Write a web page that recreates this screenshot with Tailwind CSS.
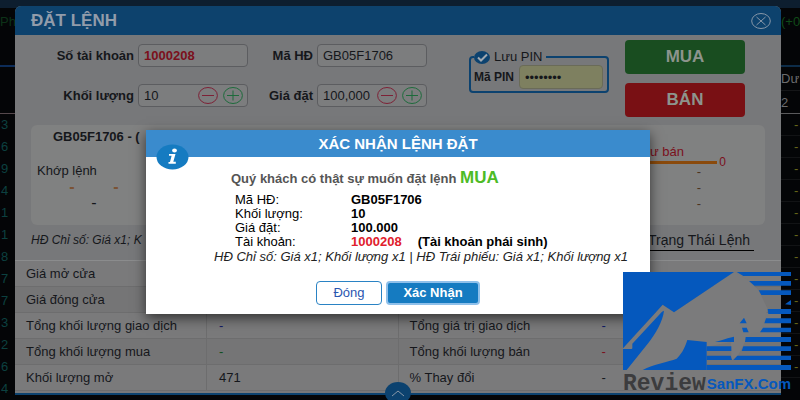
<!DOCTYPE html>
<html lang="vi">
<head>
  <meta charset="UTF-8" />
  <meta name="viewport" content="width=device-width, initial-scale=1" />
  <title>Đặt lệnh</title>
  <script src="https://cdn.jsdelivr.net/npm/@tailwindcss/browser@4"></script>
</head>
<body class="relative bg-[#040507] font-['Liberation_Sans',Arial,sans-serif] text-[13px] leading-4 text-[#15171b] min-h-screen overflow-hidden">

  <!-- top bar of the price board -->
  <div class="absolute inset-x-0 top-0 h-2 bg-[#0d1e2f]"></div>

  <div class="relative flex items-start">
    <!-- price board, left edge -->
    <aside class="w-[15px] shrink-0 overflow-hidden text-[#0c4140] pt-3.5">
      <div class="h-[53px] border-b-2 border-[#0d2c58] text-[#0c3218]">Ph</div>
      <div class="h-[47px] border-b border-[#55484c]"></div>
      <div class="flex flex-col leading-[22px] text-[13px] pl-px">
        <span>3</span><span>6</span><span>9</span><span>4</span><span>1</span><span>1</span><span>8</span><span>7</span><span>7</span><span>3</span><span>2</span><span>6</span><span>4</span>
      </div>
    </aside>

    <!-- order dialog -->
    <main class="relative flex-1 min-w-0 mt-1.5 pb-0.5 bg-[#77787a] rounded-t-md border-b-2 border-[#0c426f]">
      <header class="h-[29px] flex items-center justify-between px-4 bg-[#0d426d] rounded-t-md">
        <h1 class="text-[17px] font-bold text-[#929caa]">ĐẶT LỆNH</h1>
        <button type="button" aria-label="Đóng" class="-mr-1.5">
          <svg width="20" height="16" viewBox="0 0 20 16" fill="none" stroke="#8797a8"><ellipse cx="10" cy="8" rx="9.3" ry="7.5" /><path d="M5.5 4l9 8M14.5 4l-9 8" /></svg>
        </button>
      </header>

      <!-- order form -->
      <form class="flex pt-1 h-[90px]">
        <div class="grid grid-cols-[119px_110px_61px_110px] gap-x-1 gap-y-[17px] pt-[5px] auto-rows-[23px] items-center font-bold">
          <label for="account" class="text-right">Số tài khoản</label>
          <input id="account" value="1000208" class="w-full h-[23px] rounded border border-[#5c5d60] bg-[#7c7d7e] px-[5px] text-[#7b101c] font-bold" />
          <label for="contract" class="text-right">Mã HĐ</label>
          <input id="contract" value="GB05F1706" class="w-full h-[23px] rounded border border-[#5c5d60] bg-[#7c7d7e] px-[5px] font-normal" />

          <label for="volume" class="text-right">Khối lượng</label>
          <div class="flex items-center gap-[5px] h-[23px] rounded border border-[#5c5d60] bg-[#7c7d7e] pl-[5px] pr-1">
            <input id="volume" value="10" class="flex-1 min-w-0 font-normal" />
            <button type="button" aria-label="Giảm khối lượng"><svg width="20" height="17" viewBox="0 0 20 17" fill="none" stroke="#7d2136"><ellipse cx="10" cy="8.5" rx="9.4" ry="8" /><path d="M4 8.5h12" /></svg></button>
            <button type="button" aria-label="Tăng khối lượng"><svg width="20" height="17" viewBox="0 0 20 17" fill="none" stroke="#1d6b3b"><ellipse cx="10" cy="8.5" rx="9.4" ry="8" /><path d="M4 8.5h12M10 3.5v10" /></svg></button>
          </div>
          <label for="price" class="text-right">Giá đặt</label>
          <div class="flex items-center gap-[5px] h-[23px] rounded border border-[#5c5d60] bg-[#7c7d7e] pl-[5px] pr-1">
            <input id="price" value="100,000" class="flex-1 min-w-0 font-normal" />
            <button type="button" aria-label="Giảm giá"><svg width="20" height="17" viewBox="0 0 20 17" fill="none" stroke="#7d2136"><ellipse cx="10" cy="8.5" rx="9.4" ry="8" /><path d="M4 8.5h12" /></svg></button>
            <button type="button" aria-label="Tăng giá"><svg width="20" height="17" viewBox="0 0 20 17" fill="none" stroke="#1d6b3b"><ellipse cx="10" cy="8.5" rx="9.4" ry="8" /><path d="M4 8.5h12M10 3.5v10" /></svg></button>
          </div>
        </div>

        <fieldset class="ml-auto mt-2.5 h-[44px] w-[140px] rounded border-2 border-[#0c426f] pl-[3px] pr-1">
          <legend class="h-4 flex items-center gap-1 pr-1">
            <input id="savePin" type="checkbox" checked class="sr-only" />
            <svg width="16" height="13" viewBox="0 0 16 13"><ellipse cx="8" cy="6.5" rx="8" ry="6.5" fill="#0c426f" /><path d="M4 6.5l3 3 6-6" fill="none" stroke="#a0a8b0" stroke-width="2" /></svg>
            <label for="savePin">Lưu PIN</label>
          </legend>
          <div class="flex items-center justify-between h-6">
            <label for="pin" class="font-bold text-[12px]">Mã PIN</label>
            <input id="pin" type="password" value="12345678" class="w-[84px] h-6 rounded border border-[#6a6b58] bg-[#7e8060] px-[5px]" />
          </div>
        </fieldset>

        <div class="flex flex-col gap-[9px] ml-4 mr-9 mt-px w-[120px] text-[17px] font-bold text-[#8d948d]">
          <button type="button" class="h-[34px] rounded bg-[#194d20]">MUA</button>
          <button type="button" class="h-[34px] rounded bg-[#791014]">BÁN</button>
        </div>
      </form>

      <!-- market depth -->
      <section class="mx-4 h-[100px] rounded-md bg-[#808181] flex justify-between">
        <div class="pl-1.5 pt-1">
          <h2 class="pl-4 font-bold">GB05F1706 - (</h2>
          <p class="mt-[18px]">Khớp lệnh</p>
          <div class="grid grid-cols-[22px_22px_22px] ml-6 text-center text-[16px] leading-4 font-bold text-[#7b5335]">
            <span>-</span><span class="col-start-3">-</span>
            <span class="col-start-2 font-normal text-[#15171b]">-</span>
          </div>
        </div>
        <div class="pt-[19px] pr-[39px] w-[160px] text-[#7b101c]">
          <p class="text-right pr-[42px]">Dư bán</p>
          <div class="flex items-center h-1"><span class="flex-1 h-[3px] bg-[#8a4a0c]"></span><span class="pl-0.5 text-[12px] leading-3">0</span></div>
          <div class="flex flex-col items-end pr-[25px] text-[#4c3420]"><span>-</span><span>-</span><span>-</span></div>
        </div>
      </section>

      <div class="flex justify-between items-start px-4 h-[35px] pt-[7px]">
        <p class="italic text-[12px]">HĐ Chỉ số: Giá x1; K</p>
        <a href="#" class="mr-[11px] pr-1 border-b border-black h-[19px] text-[14px]">Trạng Thái Lệnh</a>
      </div>

      <table class="w-full table-fixed border-t border-[#8b8c8d]">
        <tbody class="bg-[#7a7a7b] [&>tr]:h-[26px] [&>tr]:border-b [&>tr]:border-[#6d6d6e] [&_th]:text-left [&_th]:font-normal [&_th]:pl-[11px] [&_td]:pl-3 [&>tr:nth-child(even)]:bg-[#757576]">
          <tr><th>Giá mở cửa</th><td colspan="3"></td></tr>
          <tr><th>Giá đóng cửa</th><td colspan="3"></td></tr>
          <tr><th>Tổng khối lượng giao dịch</th><td class="text-[#101a66] border-l border-[#6d6d6e]">-</td><th class="border-l border-[#6d6d6e]">Tổng giá trị giao dịch</th><td class="text-[#101a66]">-</td></tr>
          <tr><th>Tổng khối lượng mua</th><td class="text-[#0e5020] border-l border-[#6d6d6e]">-</td><th class="border-l border-[#6d6d6e]">Tổng khối lượng bán</th><td class="text-[#7b101c]">-</td></tr>
          <tr><th>Khối lượng mở</th><td class="border-l border-[#6d6d6e]">471</td><th class="border-l border-[#6d6d6e]">% Thay đổi</th><td>-</td></tr>
        </tbody>
      </table>

      <button type="button" aria-label="Thu gọn" class="absolute bottom-0 left-1/2 -translate-x-1/2 translate-y-1/2">
        <svg width="26" height="22" viewBox="0 0 26 22"><ellipse cx="13" cy="11" rx="13" ry="11" fill="#0c426f" /><path d="M7 14l6-5 6 5" fill="none" stroke="#8797a8" /></svg>
      </button>
    </main>

    <!-- price board, right edge -->
    <aside class="w-[19px] shrink-0 overflow-hidden whitespace-nowrap text-[#6b6c6e] pt-3.5">
      <div class="h-[53px] border-b-2 border-[#0d2c48] text-[#0f4a18]">(+0</div>
      <div class="h-[47px] border-b border-[#5a5a5c]"><div class="h-6 pt-1 border-b border-[#151618]">Dư b</div><div class="pt-1">2</div></div>
      <div class="flex flex-col leading-[21px] text-[#67651a] [&>span]:border-b [&>span]:border-[#121315] [&>span]:pl-[13px]">
        <span>-</span><span>-</span><span>-</span><span>-</span><span>-</span><span>-</span><span>-</span><span>-</span><span>-</span><span>-</span><span>-</span><span>-</span>
      </div>
    </aside>
  </div>

  <!-- confirm dialog -->
  <div role="dialog" aria-labelledby="confirmTitle" class="absolute top-[130px] left-1/2 -translate-x-1/2 -ml-[2px] w-[504px] max-w-full bg-white shadow-[0_4px_12px_rgba(0,0,0,0.6)]">
    <header class="h-[27px] flex items-center justify-center bg-[#3a8bcd] text-white">
      <h2 id="confirmTitle" class="text-[15px] font-bold">XÁC NHẬN LỆNH ĐẶT</h2>
    </header>
    <svg class="absolute top-[14px] left-[10px]" width="33" height="26" viewBox="0 0 33 26"><ellipse cx="16.5" cy="13" rx="16" ry="12.5" fill="#157bc1" /><ellipse cx="18.5" cy="6.5" rx="2.4" ry="1.9" fill="#fff" /><path d="M13 10h6.500l-2.200 7.800h2.500v1.900h-7.300v-1.700h1.500l1.600-6.300h-2.600z" fill="#fff" /></svg>

    <p class="pl-[85px] pt-[11px] h-8 leading-5 font-bold text-[#555]">Quý khách có thật sự muốn đặt lệnh <span class="text-[17px] text-[#4dbb26]">MUA</span></p>

    <dl class="grid grid-cols-[112px_1fr] pl-[89px] pt-1 leading-[14px] text-[13px] text-black [&>dd]:font-bold">
      <dt>Mã HĐ:</dt><dd class="pl-1">GB05F1706</dd>
      <dt>Khối lượng:</dt><dd class="pl-1">10</dd>
      <dt>Giá đặt:</dt><dd class="pl-1">100.000</dd>
      <dt>Tài khoản:</dt><dd class="pl-1"><span class="text-[#e0202c]">1000208</span><span class="pl-4">(Tài khoản phái sinh)</span></dd>
    </dl>
    <p class="pl-[68px] italic text-[#222] whitespace-nowrap">HĐ Chỉ số: Giá x1; Khối lượng x1 | HĐ Trái phiếu: Giá x1; Khối lượng x1</p>

    <div class="flex justify-center gap-1 pt-4 pb-[9px]">
      <button type="button" class="w-[66px] h-6 rounded border border-[#2a83c4] bg-white text-[#2a55b0]">Đóng</button>
      <button type="button" class="w-[94px] h-6 rounded border-2 border-[#8fc0ea] bg-[#157bc1] font-bold text-white">Xác Nhận</button>
    </div>
  </div>

  <!-- site logo -->
  <div class="absolute top-[272px] right-[9px] w-[168px]">
    <svg width="168" height="98" viewBox="69 36 504 294">
      <path fill="#7b7b7c" d="M188 134L222 157L402 36L447 63L476 91L503 147L482 217H460L435 246L412 290L395 300L392 246L320 260V330H69V265Z" />
      <g fill="#0558bd">
        <path d="M69 36H402L222 157L188 134L69 265Z" />
        <path d="M97 265V251L186 155L192 152C188 185 168 220 142 253L80 330H69V267H95Z" />
        <path d="M262 240L320 246V330H128C160 312 205 306 230 296C250 276 256 258 262 240Z" />
        <path d="M410 36H573V48H430ZM447 63H573V77H463ZM476 91H573V105H484ZM555 133L573 120V135ZM503 147H573V162H505ZM498 175H573V190H493ZM489 203H573V217H480ZM437 231H573V246H435ZM430 259H573V273H425ZM412 287H573V300H400Z" />
        <path d="M432 173L440 190H419ZM426 203H440L446 217H430ZM345 246C370 240 385 233 402 230V246ZM320 259H394V273H320ZM320 287H392L396 300H320ZM320 315H573V330H320Z" />
      </g>
    </svg>
    <p class="flex items-center justify-between pt-0.5 leading-6 whitespace-nowrap">
      <span class="font-['Liberation_Mono',monospace] text-[23px] font-bold text-[#3c3c3e]">Review</span>
      <span class="text-[15px] font-bold text-[#0558bd]">SanFX.Com</span>
    </p>
  </div>
</body>
</html>
